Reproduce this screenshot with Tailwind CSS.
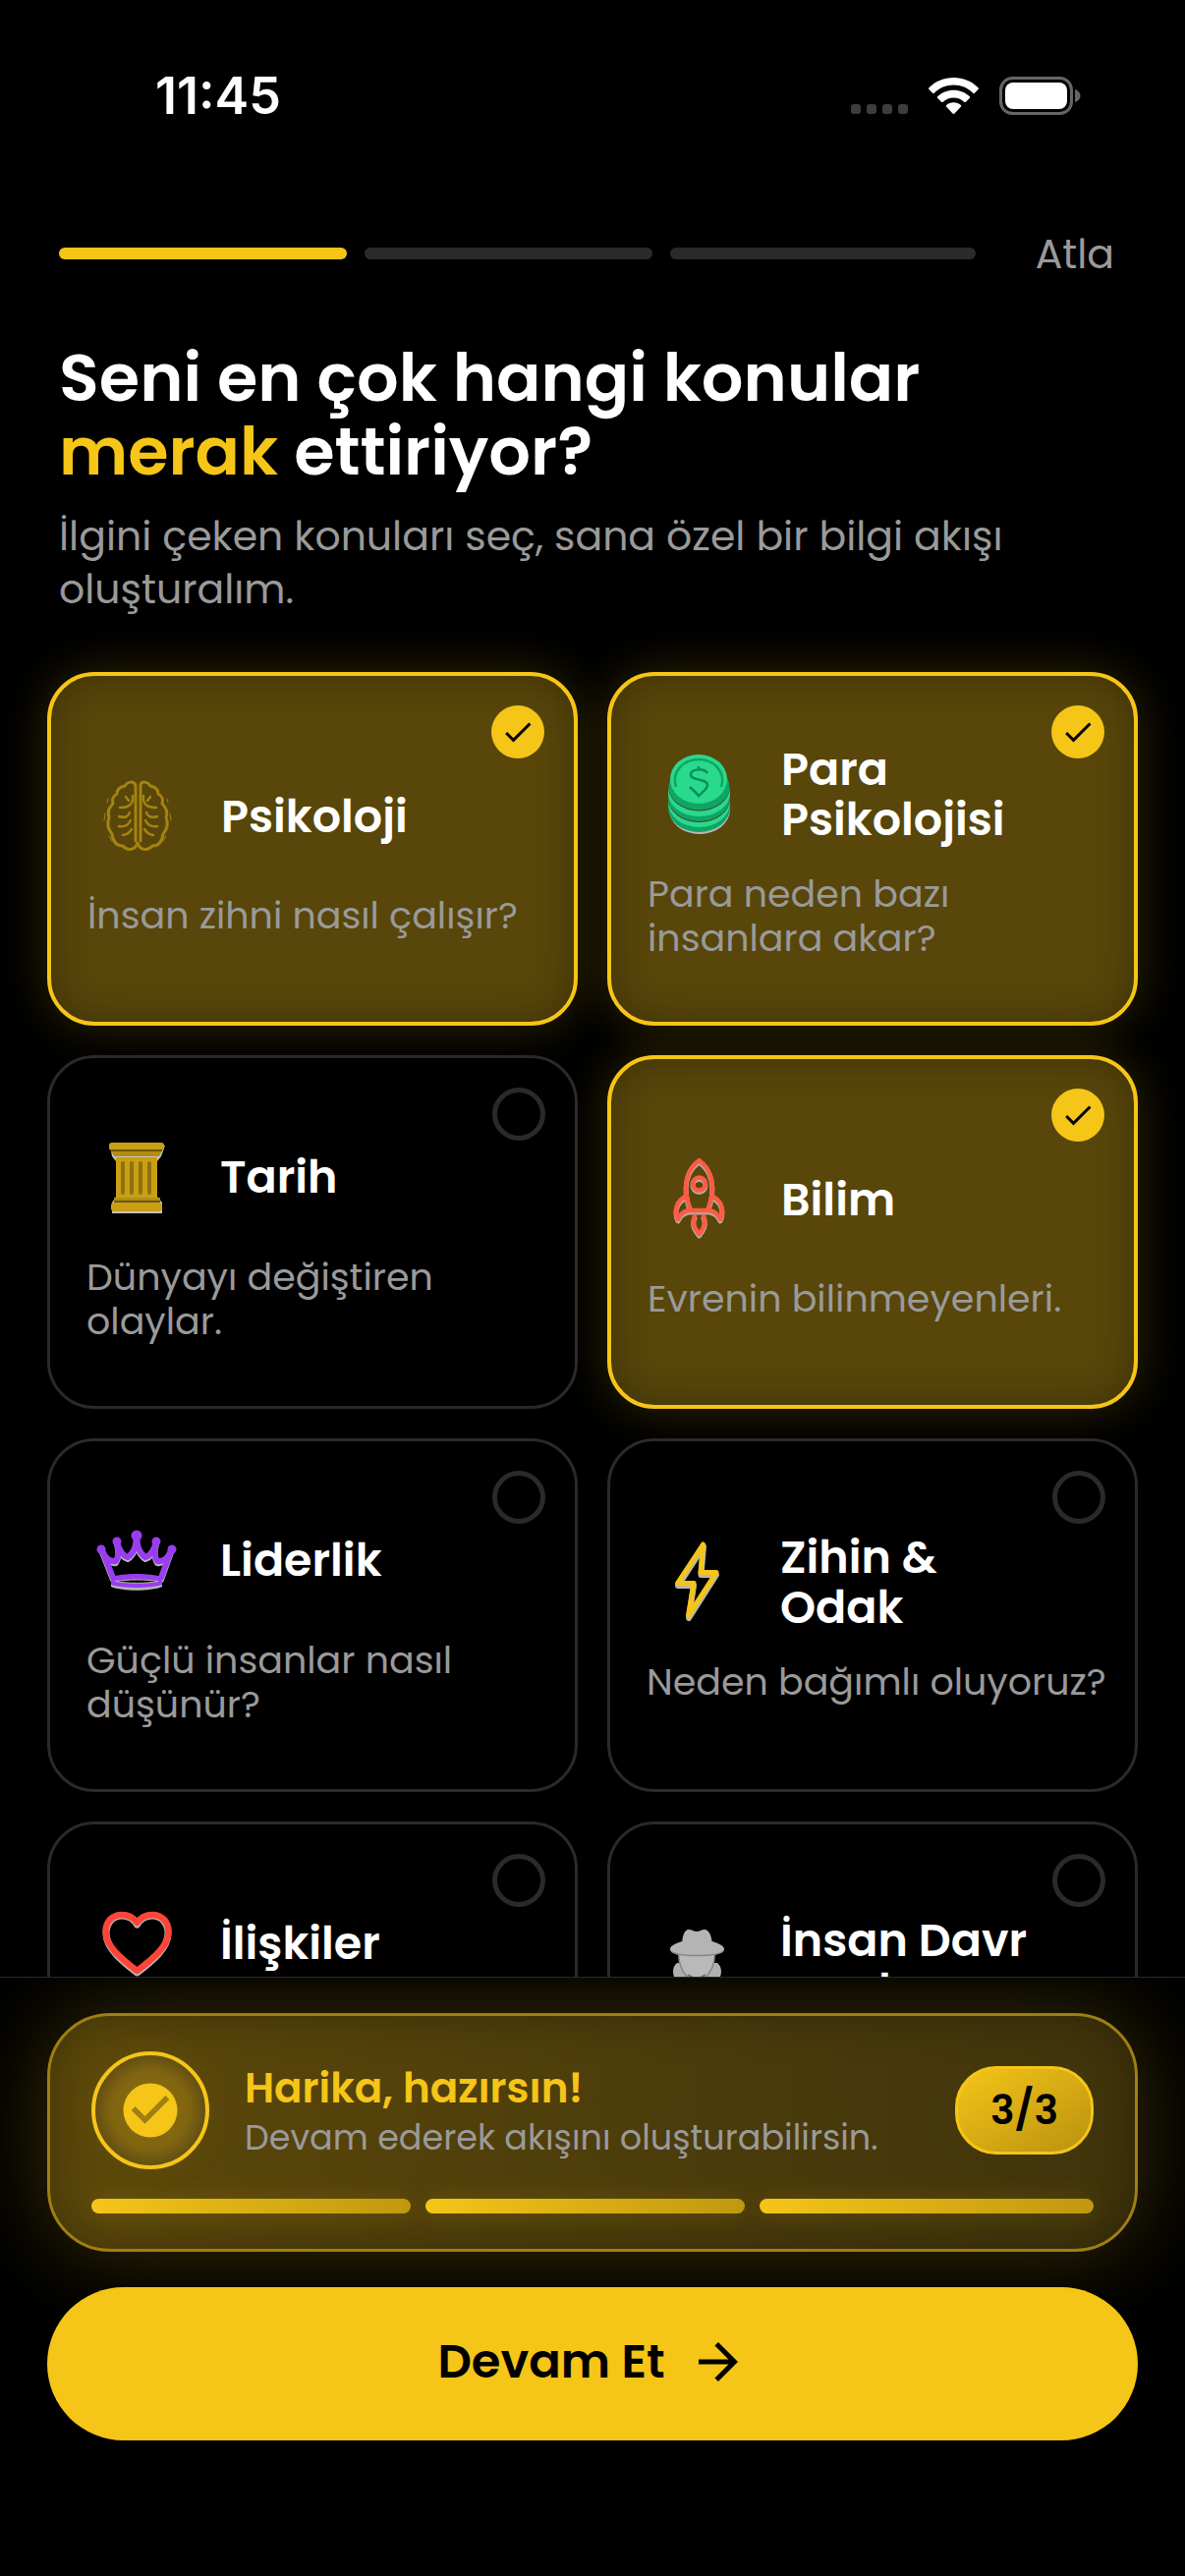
<!DOCTYPE html>
<html lang="tr">
<head>
<meta charset="utf-8">
<meta name="viewport" content="width=device-width, initial-scale=1">
<title>Konu seçimi</title>
<script src="https://cdn.jsdelivr.net/npm/@tailwindcss/browser@4"></script>
</head>
<body class="flex h-dvh flex-col overflow-hidden bg-black font-[Poppins,Inter,sans-serif] text-white">

<!-- Status bar -->
<div class="flex shrink-0 items-center justify-between pt-[60px] pr-[106px] pl-[158px]">
  <span class="font-[Inter,sans-serif] text-[52px] leading-[75px] font-semibold">11:45</span>
  <div class="flex items-center gap-[21px]">
    <svg class="h-[38px] w-[58px]" viewBox="0 0 58 38" fill="#3d3d3d"><rect x="0" y="27" width="10" height="10" rx="3"/><rect x="16" y="27" width="10" height="10" rx="3"/><rect x="32" y="27" width="10" height="10" rx="3"/><rect x="48" y="27" width="10" height="10" rx="3"/></svg>
    <svg class="h-[38px] w-[51px]" viewBox="0 0 51 38" fill="#fff"><path d="M25.5 0C16 0 7 3.700 .5 10.200c-.6.600-.6 1.300 0 1.900l3.600 3.600c.5.500 1.200.5 1.700 0C11 10.500 18 7.600 25.500 7.600S40 10.500 45.200 15.700c.5.500 1.200.5 1.700 0l3.600-3.600c.6-.6.6-1.300 0-1.900C44 3.700 35 0 25.500 0z"/><path d="M25.500 12.700c-6.200 0-11.900 2.400-16.200 6.400-.6.600-.6 1.300 0 1.900l3.700 3.700c.5.500 1.200.5 1.800 0 2.900-2.700 6.600-4.200 10.700-4.200s7.800 1.500 10.700 4.200c.6.500 1.300.5 1.800 0l3.700-3.700c.6-.6.6-1.300 0-1.900-4.300-4-10-6.400-16.200-6.400z"/><path d="M25.500 25.200c-2.800 0-5.300 1-7.300 2.700-.6.500-.6 1.300 0 1.900l6.300 6.800c.6.600 1.400.6 2 0l6.300-6.800c.6-.6.6-1.400 0-1.900-2-1.700-4.500-2.700-7.300-2.700z"/></svg>
    <svg class="h-[39px] w-[83px]" viewBox="0 0 83 39"><rect x="1.500" y="1.500" width="72" height="36" rx="12" fill="none" stroke="#666" stroke-width="3"/><rect x="6" y="6" width="63" height="27" rx="8" fill="#fff"/><path d="M77 13c4 1.500 5.500 4 5.500 6.500S81 24.500 77 26z" fill="#666"/></svg>
  </div>
</div>

<!-- Step progress -->
<header class="mt-24 flex h-[54px] shrink-0 items-center pr-[66px] pl-[60px]">
  <div class="grid flex-1 grid-cols-3">
    <div class="pr-[18px]"><div class="h-3 rounded-full bg-[#f5c518]"></div></div>
    <div class="pr-[18px]"><div class="h-3 rounded-full bg-[#2a2a2a]"></div></div>
    <div><div class="h-3 rounded-full bg-[#2a2a2a]"></div></div>
  </div>
  <button type="button" class="w-[147px] pt-0.5 pr-1.5 text-right text-[41px] leading-[54px] text-[#9a9a9a]">Atla</button>
</header>

<main class="min-h-0 flex-1 overflow-hidden pt-[62px]">
  <div class="px-[60px]">
    <h1 class="text-[67px] leading-[75px] font-semibold">Seni en çok hangi konular<br><span class="text-[#f5c518]">merak</span> ettiriyor?</h1>
    <p class="mt-[22px] text-[41px] leading-[54px] text-[#9a9a9a]">İlgini çeken konuları seç, sana özel bir bilgi akışı oluşturalım.</p>
  </div>

  <div class="mt-[57px] grid grid-cols-2 gap-[30px] px-12">

    <label class="relative flex min-h-[360px] flex-col justify-center rounded-[48px] border-4 border-[#f5c518] bg-[#58460a] pt-1.5 pr-6 pl-[37px] shadow-[0_0_48px_rgba(245,197,24,0.2),inset_0_0_40px_rgba(0,0,0,0.3)]">
      <input type="checkbox" checked class="absolute top-[30px] right-[30px] size-[54px] appearance-none rounded-full bg-[#f5c518]">
      <svg class="pointer-events-none absolute top-[39px] right-[39px] size-9" viewBox="0 0 24 24"><path d="M9 16.170L4.830 12l-1.420 1.410L9 19 21 7l-1.410-1.410z"/></svg>
      <span class="flex h-[102px] items-center gap-[34px]">
        <svg class="size-[102px] shrink-0" viewBox="0 0 102 102" fill="none" stroke="#a58213" stroke-width="3" stroke-linecap="round" stroke-linejoin="round">
          <path d="M49 76V19c-2-4-8-4-11 1-5 1-8 4-8 8-5 3-5 6-4 10-5 5-6 9-4 14-3 7-1 12 3 17 1 8 5 12 11 12 5 6 13 4 15-3 2 7 10 9 15 3 6 0 10-4 11-12 4-5 6-10 3-17 2-5 1-9-4-14 1-4 1-7-4-10 0-4-3-7-8-8-3-5-9-5-10-1v57"/>
          <path d="M39 31l3 4m4-5c1 8-3 12-13 12m-1 9c6 2 10 0 11-4m-11 14c6 1 10-2 12-6m-8 15c5 0 7-3 9-6M64 31l-3 4m-4-5c-1 8 3 12 13 12m1 9c-6 2-10 0-11-4m11 14c-6 1-10-2-12-6m8 15c-5 0-7-3-9-6" stroke-width="2.500"/>
          <path d="M21 33l-1 4m-2 11l-1 7m5 16l3 5M81 33l1 4m2 11l1 7m-5 16l-3 5" stroke-width="1"/>
        </svg>
        <span class="text-[46px] leading-[51px] font-semibold">Psikoloji</span>
      </span>
      <span class="mt-[27px] min-h-[45px] text-[38px] leading-[45px] text-[#9a9a9a]">İnsan zihni nasıl çalışır?</span>
    </label>

    <label class="relative flex min-h-[360px] flex-col justify-center rounded-[48px] border-4 border-[#f5c518] bg-[#58460a] pt-1.5 pr-6 pl-[37px] shadow-[0_0_48px_rgba(245,197,24,0.2),inset_0_0_40px_rgba(0,0,0,0.3)]">
      <input type="checkbox" checked class="absolute top-[30px] right-[30px] size-[54px] appearance-none rounded-full bg-[#f5c518]">
      <svg class="pointer-events-none absolute top-[39px] right-[39px] size-9" viewBox="0 0 24 24"><path d="M9 16.170L4.830 12l-1.420 1.410L9 19 21 7l-1.410-1.410z"/></svg>
      <span class="flex h-[102px] items-center gap-[34px]">
        <svg class="size-[102px] shrink-0" viewBox="0 0 102 102" fill="none">
          <ellipse cx="53" cy="66" rx="31" ry="25" fill="#b9b9b9"/>
          <ellipse cx="52.500" cy="64" rx="31.500" ry="25" fill="#0fa565"/>
          <ellipse cx="52.500" cy="59" rx="31.500" ry="25" fill="#29d98c"/>
          <ellipse cx="52.500" cy="55" rx="31.500" ry="24" fill="#4b3b20"/>
          <ellipse cx="52.500" cy="54" rx="31.500" ry="24" fill="#0fa565"/>
          <ellipse cx="52.500" cy="49" rx="31.500" ry="24" fill="#29d98c"/>
          <ellipse cx="52.500" cy="44" rx="31" ry="23.500" fill="#4b3b20"/>
          <ellipse cx="52.500" cy="43" rx="31" ry="23.500" fill="#0fa565"/>
          <ellipse cx="52" cy="35" rx="29" ry="25" fill="#29d98c"/>
          <path d="M29 43c-5-15 7-28 23-28s28 13 23 28" stroke="#0fa565" stroke-width="2.500"/>
          <path d="M61 29c-3-5-16-5-17 1-1 7 17 4 17 11 0 4-5 7-9 11-3-4-6-6-9-9M52 22v3" stroke="#0a8f56" stroke-width="2.500"/>
        </svg>
        <span class="text-[46px] leading-[51px] font-semibold">Para<br>Psikolojisi</span>
      </span>
      <span class="mt-[27px] min-h-[45px] text-[38px] leading-[45px] text-[#9a9a9a]">Para neden bazı insanlara akar?</span>
    </label>

    <label class="relative flex min-h-[360px] flex-col justify-center rounded-[48px] border-3 border-[#2a2a2a] bg-black pt-1.5 pr-6 pl-[37px]">
      <input type="checkbox" class="absolute top-[30px] right-[30px] size-[54px] appearance-none rounded-full border-[5px] border-[#2a2a2a]">
      <span class="flex h-[102px] items-center gap-[34px]">
        <svg class="size-[102px] shrink-0" viewBox="0 0 102 102">
          <path d="M24 18h56l-4 11-4 5v36l5 6v11H26V76l4-6V34l-4-5z" fill="#c4c4c4"/>
          <rect x="23" y="15" width="56" height="8" rx="3" fill="#c99f14"/>
          <path d="M25 23h52l-3 6H28z" fill="#b38d12"/><path d="M25 22h52v2H25z" fill="#6f570c"/>
          <path d="M30 30h42v41H30z" fill="#c99f14"/><path d="M28 71h47v5H28z" fill="#b38d12"/><path d="M28 74h47v2H28z" fill="#6f570c"/>
          <rect x="25" y="76" width="52" height="9" rx="3" fill="#c99f14"/>
          <path d="M37 36v30m9-30v30m9-30v30m9-30v30" stroke="#8f700f" stroke-width="4" stroke-linecap="round"/>
        </svg>
        <span class="text-[46px] leading-[51px] font-semibold">Tarih</span>
      </span>
      <span class="mt-[27px] min-h-[45px] text-[38px] leading-[45px] text-[#9a9a9a]">Dünyayı değiştiren olaylar.</span>
    </label>

    <label class="relative flex min-h-[360px] flex-col justify-center rounded-[48px] border-4 border-[#f5c518] bg-[#58460a] pt-1.5 pr-6 pl-[37px] shadow-[0_0_48px_rgba(245,197,24,0.2),inset_0_0_40px_rgba(0,0,0,0.3)]">
      <input type="checkbox" checked class="absolute top-[30px] right-[30px] size-[54px] appearance-none rounded-full bg-[#f5c518]">
      <svg class="pointer-events-none absolute top-[39px] right-[39px] size-9" viewBox="0 0 24 24"><path d="M9 16.170L4.830 12l-1.420 1.410L9 19 21 7l-1.410-1.410z"/></svg>
      <span class="flex h-[102px] items-center gap-[34px]">
        <svg class="size-[102px] shrink-0" viewBox="0 0 102 102" fill="none" stroke-linejoin="round" stroke-linecap="round">
          <defs><g id="rocket"><path d="M44 62c-5-12-6-22-4-32 2-9 7-15 12.500-19C58 15 63 21 65 30c2 10 1 20-4 32z"/><circle cx="52.500" cy="35" r="6.500"/><path d="M38 48c-7 4-9 9-9 15 0 4 1 6 2 8 2-5 6-8 11-9M67 48c7 4 9 9 9 15 0 4-1 6-2 8-2-5-6-8-11-9M48 68c-3 6-1 11 4.500 18C58 79 60 74 57 68"/></g></defs>
          <use href="#rocket" y="2" stroke="#b5aaa0" stroke-width="5"/>
          <use href="#rocket" stroke="#ff5a45" stroke-width="4.500"/>
        </svg>
        <span class="text-[46px] leading-[51px] font-semibold">Bilim</span>
      </span>
      <span class="mt-[27px] min-h-[45px] text-[38px] leading-[45px] text-[#9a9a9a]">Evrenin bilinmeyenleri.</span>
    </label>

    <label class="relative flex min-h-[360px] flex-col justify-center rounded-[48px] border-3 border-[#2a2a2a] bg-black pt-1.5 pr-6 pl-[37px]">
      <input type="checkbox" class="absolute top-[30px] right-[30px] size-[54px] appearance-none rounded-full border-[5px] border-[#2a2a2a]">
      <span class="flex h-[102px] items-center gap-[34px]">
        <svg class="size-[102px] shrink-0" viewBox="0 0 102 102" fill="none" stroke-linejoin="round" stroke-linecap="round">
          <defs><path id="crown" d="M27 68L16 40c3 8 7 12 14 11 3-5 3-12 1-19 3 9 6 14 11 15 6-4 9-12 9-22 0 10 3 18 9 22 5-1 8-6 11-15-2 7-2 14 1 19 7 1 11-3 14-11L76 68"/></defs>
          <use href="#crown" y="2" stroke="#b9b4b4" stroke-width="6"/>
          <path d="M25 66h52v11c-12 5-40 5-52 0z" fill="#b9b4b4"/>
          <use href="#crown" stroke="#9a3df0" stroke-width="6"/>
          <path d="M25 67c12-4 40-4 52 0v8c-12 4-40 4-52 0z" fill="#9a3df0"/>
          <path d="M30 71.500c12-2 31-2 43 0-12 2.500-31 2.500-43 0z" fill="#000" stroke="#b9b4b4" stroke-width="1"/>
          <g fill="#9a3df0"><circle cx="51" cy="25" r="5.500"/><circle cx="31" cy="31" r="4.500"/><circle cx="71" cy="31" r="4.500"/><circle cx="15" cy="39" r="4.500"/><circle cx="87" cy="39" r="4.500"/></g>
        </svg>
        <span class="text-[46px] leading-[51px] font-semibold">Liderlik</span>
      </span>
      <span class="mt-[27px] min-h-[45px] text-[38px] leading-[45px] text-[#9a9a9a]">Güçlü insanlar nasıl düşünür?</span>
    </label>

    <label class="relative flex min-h-[360px] flex-col justify-center rounded-[48px] border-3 border-[#2a2a2a] bg-black pt-1.5 pr-6 pl-[37px]">
      <input type="checkbox" class="absolute top-[30px] right-[30px] size-[54px] appearance-none rounded-full border-[5px] border-[#2a2a2a]">
      <span class="flex h-[102px] items-center gap-[34px]">
        <svg class="size-[102px] shrink-0" viewBox="0 0 102 102" fill="none" stroke-linejoin="round">
          <path d="M58 14l-2.500 29H71L43 87l5-33H32z" stroke="#bdb7a6" stroke-width="6"/>
          <path d="M57.500 12L55 40.500h16L42.500 84.500 48 51.500H31.500z" stroke="#f5c518" stroke-width="5"/>
        </svg>
        <span class="text-[46px] leading-[51px] font-semibold">Zihin &amp;<br>Odak</span>
      </span>
      <span class="mt-[27px] min-h-[45px] text-[38px] leading-[45px] text-[#9a9a9a]">Neden bağımlı oluyoruz?</span>
    </label>

    <label class="relative flex min-h-[360px] flex-col justify-center rounded-[48px] border-3 border-[#2a2a2a] bg-black pt-1.5 pr-6 pl-[37px]">
      <input type="checkbox" class="absolute top-[30px] right-[30px] size-[54px] appearance-none rounded-full border-[5px] border-[#2a2a2a]">
      <span class="flex h-[102px] items-center gap-[34px]">
        <svg class="size-[102px] shrink-0" viewBox="0 0 102 102" fill="none" stroke-linejoin="round">
          <path d="M51.500 80C36 68 20 55 20 40c0-11 7-18 16-18 7 0 12 3 15.500 9C55 25 60 22 67 22c9 0 16 7 16 18 0 15-16 28-31.500 40z" stroke="#b9b4b4" stroke-width="7"/>
          <path d="M51.500 78C36 66 19.500 53 19.500 38.500c0-11 7-17.500 16.500-17.500 7 0 12 3 15.500 8C55 24 60 21 67 21c9.500 0 16.500 6.500 16.500 17.500C83.500 53 67 66 51.500 78z" stroke="#ff4438" stroke-width="6.500"/>
        </svg>
        <span class="text-[46px] leading-[51px] font-semibold">İlişkiler</span>
      </span>
      <span class="mt-[27px] min-h-[90px] text-[38px] leading-[45px] text-[#9a9a9a]"></span>
    </label>

    <label class="relative flex min-h-[360px] flex-col justify-center rounded-[48px] border-3 border-[#2a2a2a] bg-black pt-1.5 pr-6 pl-[37px]">
      <input type="checkbox" class="absolute top-[30px] right-[30px] size-[54px] appearance-none rounded-full border-[5px] border-[#2a2a2a]">
      <span class="flex h-[102px] items-center gap-[34px]">
        <svg class="size-[102px] shrink-0" viewBox="0 0 102 102">
          <path d="M20 84c0-12 2-18 8-22-2-5-1-11 3-14h41c4 3 5 9 3 14 6 4 8 10 8 22z" fill="#b0b0b0"/>
          <path d="M33 38h36c1 10-3 18-8 24l-10 3-10-3c-5-6-9-14-8-24z" fill="#b9b9b9" stroke="#858585" stroke-width="1.500"/>
          <path d="M42 60l9 5 9-5" fill="none" stroke="#6f6f6f" stroke-width="2"/>
          <path d="M36 32c0-10 2-18 7-18 3 0 5 2 8 2s5-2 8-2c5 0 8 8 8 18z" fill="#b4b4b4"/>
          <path d="M24 34c0-4 7-6 12-8 9 4 22 4 31 0 5 2 12 4 12 8 0 5-13 7-27.500 7S24 39 24 34z" fill="#b4b4b4"/>
          <path d="M25 36c6 6 46 6 53 0" fill="none" stroke="#858585" stroke-width="1.500"/>
        </svg>
        <span class="text-[46px] leading-[51px] font-semibold">İnsan Davr<br>anışları</span>
      </span>
      <span class="mt-[27px] min-h-[45px] text-[38px] leading-[45px] text-[#9a9a9a]"></span>
    </label>

  </div>
</main>

<footer class="shrink-0 overflow-hidden border-t border-[#2a2a2a] bg-black px-12 pt-9 pb-[138px]">
  <section class="rounded-[64px] border-3 border-[#a07f12] bg-linear-to-r from-[#5c480a] to-[#40340b] px-[42px] py-9 shadow-[0_0_90px_rgba(245,197,24,0.24),inset_0_0_45px_rgba(0,0,0,0.3)]">
    <div class="flex items-center">
      <span class="flex size-[120px] shrink-0 items-center justify-center rounded-full border-4 border-[#f5c518] bg-radial from-[#8c6e10] via-[#806410] to-[#645012] to-70% shadow-[0_0_36px_rgba(245,197,24,0.06)]">
        <svg class="size-[66px]" viewBox="0 0 24 24"><circle cx="12" cy="12" r="10" fill="#f5c518"/><path fill="#a07f12" d="M10 17l-5-5 1.410-1.410L10 14.170l7.590-7.590L19 8z"/></svg>
      </span>
      <div class="ml-9 flex-1 pt-1.5">
        <h2 class="text-[42px] leading-[50px] font-semibold text-[#f5c518]">Harika, hazırsın!</h2>
        <p class="text-[35px] leading-[50px] text-[#9a9a9a]">Devam ederek akışını oluşturabilirsin.</p>
      </div>
      <span class="flex h-[90px] w-[141px] shrink-0 items-center justify-center rounded-[42px] border-3 border-[#f5c518] bg-linear-to-br from-[#f5c518] to-[#b9920f] text-[41px] font-semibold text-black">3/3</span>
    </div>
    <div class="mt-[30px] grid grid-cols-3">
      <div class="pr-[15px]"><div class="h-[15px] rounded-full bg-linear-to-r from-[#f5c518] to-[#c0980f] shadow-[0_0_24px_rgba(245,197,24,0.15)]"></div></div>
      <div class="pr-[15px]"><div class="h-[15px] rounded-full bg-linear-to-r from-[#f5c518] to-[#c0980f] shadow-[0_0_24px_rgba(245,197,24,0.15)]"></div></div>
      <div><div class="h-[15px] rounded-full bg-linear-to-r from-[#f5c518] to-[#c0980f] shadow-[0_0_24px_rgba(245,197,24,0.15)]"></div></div>
    </div>
  </section>
  <button type="button" class="relative mt-9 flex h-[156px] w-full items-center justify-center gap-6 rounded-full bg-[#f5c518] pb-1 text-[48px] font-semibold text-black">
    Devam Et
    <svg class="size-[60px]" viewBox="0 0 24 24"><path d="M12 4l-1.410 1.410L16.170 11H4v2h12.170l-5.580 5.590L12 20l8-8z"/></svg>
  </button>
</footer>

</body>
</html>
